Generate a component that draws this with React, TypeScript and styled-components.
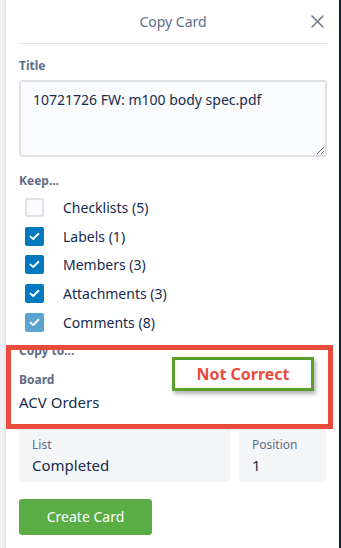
import React, { useState } from 'react';
import styled, { createGlobalStyle } from 'styled-components';

const GlobalStyle = createGlobalStyle`
  html, body {
    margin: 0;
    padding: 0;
    background: #ffffff;
  }
  body {
    font-family: "Noto Sans", "Open Sans", sans-serif;
    color: #172b4d;
  }
`;

const KEEP_ITEMS = [
  { label: 'Checklists', count: 5, checked: false, muted: false },
  { label: 'Labels', count: 1, checked: true, muted: false },
  { label: 'Members', count: 3, checked: true, muted: false },
  { label: 'Attachments', count: 3, checked: true, muted: false },
  { label: 'Comments', count: 8, checked: true, muted: true },
];

const App = () => {
  const [title, setTitle] = useState('10721726 FW: m100 body spec.pdf');

  return (
    <>
      <GlobalStyle />
      <Screen>
        <Gutter />
        <Panel>
          <Header>
            <HeaderTitle>Copy Card</HeaderTitle>
            <CloseButton aria-label="Close">
              <svg width="13" height="13" viewBox="0 0 13 13">
                <path
                  d="M1 1 L12 12 M12 1 L1 12"
                  stroke="#6b778c"
                  strokeWidth="1.5"
                  strokeLinecap="round"
                />
              </svg>
            </CloseButton>
          </Header>

          <Body>
            <Label>Title</Label>
            <TitleInput value={title} onChange={(e) => setTitle(e.target.value)} />

            <Label top={16}>Keep...</Label>
            <KeepList>
              {KEEP_ITEMS.map((item) => (
                <KeepRow key={item.label}>
                  <Box checked={item.checked} muted={item.muted}>
                    {item.checked && (
                      <svg width="11" height="9" viewBox="0 0 11 9">
                        <path
                          d="M1.5 4.6 L4.2 7 L9.5 1.8"
                          fill="none"
                          stroke="#ffffff"
                          strokeWidth="1.9"
                          strokeLinecap="round"
                          strokeLinejoin="round"
                        />
                      </svg>
                    )}
                  </Box>
                  <KeepText>
                    {item.label} ({item.count})
                  </KeepText>
                </KeepRow>
              ))}
            </KeepList>

            <Label top={6}>Copy to...</Label>
            <Label top={13}>Board</Label>
            <BoardName>ACV Orders</BoardName>

            <SelectRow>
              <Select>
                <SelectLabel>List</SelectLabel>
                <SelectValue>Completed</SelectValue>
              </Select>
              <Select>
                <SelectLabel>Position</SelectLabel>
                <SelectValue>1</SelectValue>
              </Select>
            </SelectRow>

            <CreateButton>Create Card</CreateButton>
          </Body>

          <RedFrame />
          <NoteBox>Not Correct</NoteBox>
        </Panel>
        <Edge />
      </Screen>
    </>
  );
};

const Screen = styled.div`
  display: flex;
  width: 341px;
  height: 548px;
  overflow: hidden;
`;

const Gutter = styled.div`
  width: 6px;
  flex-shrink: 0;
  background: linear-gradient(to right, #f1f2f5 0%, #eceef2 70%, #dfe2e8 100%);
`;

const Edge = styled.div`
  width: 2px;
  flex-shrink: 0;
  background: #0e2240;
`;

const Panel = styled.div`
  position: relative;
  flex: 1;
  background: #ffffff;
  padding: 0 12px 0 13px;
`;

const Header = styled.div`
  position: relative;
  display: flex;
  align-items: center;
  justify-content: center;
  height: 43px;
  border-bottom: 1px solid #dfe1e6;
`;

const HeaderTitle = styled.span`
  font-size: 14px;
  color: #5e6c84;
  line-height: 20px;
`;

const CloseButton = styled.button`
  position: absolute;
  right: 3px;
  top: 15px;
  display: flex;
  padding: 0;
  border: 0;
  background: none;
  cursor: pointer;
`;

const Body = styled.div`
  display: flex;
  flex-direction: column;
  align-items: flex-start;
`;

const Label = styled.div<{ top?: number }>`
  margin-top: ${(p) => p.top ?? 14}px;
  font-size: 12px;
  font-weight: 700;
  line-height: 16px;
  color: #5e6c84;
`;

const TitleInput = styled.textarea`
  box-sizing: border-box;
  width: 100%;
  height: 77px;
  margin-top: 6px;
  padding: 8px 12px;
  border: 2px solid #dfe1e6;
  border-radius: 3px;
  background: #fafbfc;
  font-family: inherit;
  font-size: 14px;
  line-height: 20px;
  color: #172b4d;
  resize: vertical;
  outline: none;
`;

const KeepList = styled.div`
  display: flex;
  flex-direction: column;
  margin-top: 4px;
`;

const KeepRow = styled.label`
  display: flex;
  align-items: center;
  height: 28.75px;
  padding-left: 6px;
  cursor: pointer;
`;

const Box = styled.span<{ checked: boolean; muted: boolean }>`
  box-sizing: border-box;
  display: flex;
  align-items: center;
  justify-content: center;
  width: 19px;
  height: 19px;
  border-radius: 2px;
  background: ${(p) => (!p.checked ? '#fafbfc' : p.muted ? '#5ba4cf' : '#0079bf')};
  border: ${(p) => (p.checked ? 'none' : '2px solid #dfe1e6')};
`;

const KeepText = styled.span`
  margin-left: 19px;
  font-size: 14px;
  color: #172b4d;
`;

const BoardName = styled.div`
  margin-top: 4px;
  font-size: 15px;
  line-height: 20px;
  color: #172b4d;
`;

const SelectRow = styled.div`
  display: flex;
  gap: 9px;
  width: 100%;
  margin-top: 17px;
`;

const Select = styled.div`
  box-sizing: border-box;
  flex: 1;
  height: 53px;
  padding: 8px 13px;
  border-radius: 3px;
  background: #f4f5f7;

  &:first-child {
    flex: 0 0 211px;
  }
`;

const SelectLabel = styled.div`
  font-size: 12px;
  line-height: 16px;
  color: #5e6c84;
`;

const SelectValue = styled.div`
  margin-top: 2px;
  font-size: 15px;
  line-height: 20px;
  color: #172b4d;
`;

const CreateButton = styled.button`
  margin-top: 17px;
  width: 133px;
  height: 36px;
  border: 0;
  border-radius: 3px;
  background: #5aac44;
  color: #ffffff;
  font-family: inherit;
  font-size: 14px;
  cursor: pointer;
`;

const RedFrame = styled.div`
  position: absolute;
  left: 0;
  top: 345px;
  width: 327px;
  height: 84px;
  box-sizing: border-box;
  border: 5px solid #e84c3d;
  pointer-events: none;
`;

const NoteBox = styled.div`
  position: absolute;
  left: 166px;
  top: 357px;
  box-sizing: border-box;
  width: 142px;
  height: 34px;
  display: flex;
  align-items: center;
  justify-content: center;
  border: 3px solid #5a9e2f;
  background: #ffffff;
  box-shadow: 2px 3px 4px rgba(0, 0, 0, 0.3);
  color: #e84c3d;
  font-size: 16px;
  font-weight: 700;
`;

export default App;
